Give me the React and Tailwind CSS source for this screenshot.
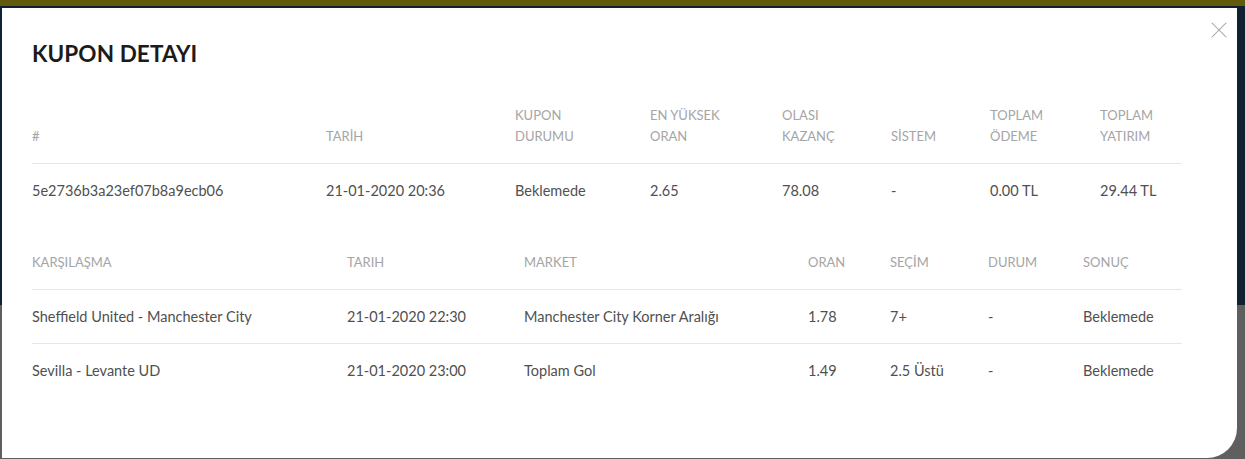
import { X } from 'lucide-react';

const couponHead = ['#', 'TARİH', 'KUPON DURUMU', 'EN YÜKSEK ORAN', 'OLASI KAZANÇ', 'SİSTEM', 'TOPLAM ÖDEME', 'TOPLAM YATIRIM'];
const couponRow = ['5e2736b3a23ef07b8a9ecb06', '21-01-2020 20:36', 'Beklemede', '2.65', '78.08', '-', '0.00 TL', '29.44 TL'];

const matchHead = ['KARŞILAŞMA', 'TARIH', 'MARKET', 'ORAN', 'SEÇİM', 'DURUM', 'SONUÇ'];
const matches = [
  ['Sheffield United - Manchester City', '21-01-2020 22:30', 'Manchester City Korner Aralığı', '1.78', '7+', '-', 'Beklemede'],
  ['Sevilla - Levante UD', '21-01-2020 23:00', 'Toplam Gol', '1.49', '2.5 Üstü', '-', 'Beklemede'],
];

const couponCols = 'grid grid-cols-[294px_189px_135px_132px_109px_99px_110px_82px]';
const matchCols = 'grid grid-cols-[315px_177px_284px_82px_98px_95px_99px]';

const App = () => {
  return (
    <div className="relative w-[1245px] h-[459px] overflow-hidden font-['Lato',sans-serif]">
      <div className="flex flex-col h-full">
        <div className="h-[6px] bg-[#635a0b]"></div>
        <div className="h-[299px] bg-[#0f2132]"></div>
        <div className="flex-1 bg-[#5f5f5f]"></div>
      </div>

      <div className="absolute left-[2px] top-[8px] right-[8px] bottom-[1px] bg-white rounded-br-[30px] pl-[30px] pt-[32px]">
        <button className="absolute right-[4px] top-[8px] text-[#a0a0a0]">
          <X className="w-[28px] h-[28px]" strokeWidth={0.9} />
        </button>

        <h2 className="text-[22.5px] leading-[28px] font-bold text-[#1b1b1b] tracking-[0.1px]">KUPON DETAYI</h2>

        <div className="w-[1150px] mt-[21px]">
          <div className={`${couponCols} items-end pt-[16px] pb-[16px] border-b border-[#e6e6e6]`}>
            {couponHead.map((h) => (
              <div key={h} className="text-[13px] leading-[21px] text-[#a5a5a5] pr-[40px]">{h}</div>
            ))}
          </div>
          <div className={`${couponCols} items-center h-[53px]`}>
            {couponRow.map((c, i) => (
              <div key={i} className="text-[14.5px] text-[#505050]">{c}</div>
            ))}
          </div>

          <div className={`${matchCols} items-center h-[54px] mt-[19px] border-b border-[#e6e6e6]`}>
            {matchHead.map((h) => (
              <div key={h} className="text-[13px] text-[#a5a5a5]">{h}</div>
            ))}
          </div>
          {matches.map((m, r) => (
            <div key={r} className={`${matchCols} items-center h-[54px] ${r === 0 ? 'border-b border-[#e6e6e6]' : ''}`}>
              {m.map((c, i) => (
                <div key={i} className="text-[14.5px] text-[#505050]">{c}</div>
              ))}
            </div>
          ))}
        </div>
      </div>
    </div>
  );
};

export default App;
